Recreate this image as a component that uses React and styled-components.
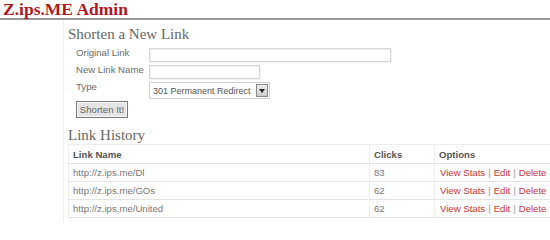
import React from 'react';
import styled, { createGlobalStyle } from 'styled-components';

const GlobalStyle = createGlobalStyle`
  html, body {
    margin: 0;
    padding: 0;
    background: #fff;
    overflow: hidden;
  }
  body {
    font-family: "Liberation Sans", Arial, sans-serif;
    width: 550px;
    height: 222px;
  }
`;

const Header = styled.h1`
  margin: 0;
  padding: 1px 0 0 3px;
  height: 17px;
  line-height: 17px;
  font-family: "Liberation Serif", "Times New Roman", serif;
  font-size: 17.5px;
  font-weight: bold;
  color: #b0171f;
  border-bottom: 2px solid #999;
`;

const Main = styled.div`
  margin-left: 63px;
  border-left: 1px solid #eee;
  padding: 5px 0 10px 4px;
  height: 200px;
`;

const SectionTitle = styled.h2`
  margin: 0;
  font-family: "Liberation Serif", "Times New Roman", serif;
  font-size: 15px;
  font-weight: normal;
  line-height: 18px;
  color: #666;
`;

const Form = styled.form`
  display: grid;
  grid-template-columns: 73px auto;
  grid-auto-rows: 17px;
  margin: 5px 0 0 8px;
  align-items: start;
`;

const Label = styled.label`
  font-size: 9.6px;
  color: #6a6a6a;
  line-height: 13px;
  margin-top: -2px;
  white-space: nowrap;
`;

const TextInput = styled.input`
  box-sizing: border-box;
  width: ${p => p.w}px;
  height: 14px;
  padding: 0;
  margin: 0;
  border: 1px solid #d6d6d6;
  box-shadow: inset 1px 1px 0 #eee, 1px 1px 0 #f2f2f2;
  background: #fff;
`;

const SelectBox = styled.div`
  box-sizing: border-box;
  width: 121px;
  height: 17px;
  border: 1px solid #d0d0d0;
  display: flex;
  align-items: center;
  justify-content: space-between;
  padding: 0 1px 0 3px;
  font-size: 9px;
  color: #555;
  background: #fff;
  white-space: nowrap;
`;

const DropButton = styled.span`
  box-sizing: border-box;
  flex: none;
  width: 12px;
  height: 13px;
  border: 1px solid #888;
  background: linear-gradient(#eee, #ccc);
  display: flex;
  align-items: center;
  justify-content: center;
`;

const SubmitButton = styled.button`
  grid-column: 1 / span 2;
  margin-top: 2px;
  box-sizing: border-box;
  width: 52px;
  height: 17px;
  padding: 0;
  font-family: "Liberation Sans", Arial, sans-serif;
  font-size: 9.6px;
  color: #666;
  background: #e4e4e4;
  border: 1px solid #777;
  box-shadow: inset 0 0 0 1px #fafafa;
`;

const HistoryTitle = styled(SectionTitle)`
  margin-top: 10px;
`;

const Table = styled.table`
  width: 500px;
  border-collapse: collapse;
  font-size: 9.6px;
  color: #777;
  border-top: 1px solid #eee;
  border-left: 1px solid #eee;
`;

const HeadCell = styled.th`
  text-align: left;
  font-weight: bold;
  color: #555;
  height: 18px;
  padding: 0 0 0 4px;
  width: ${p => p.w ? `${p.w}px` : 'auto'};
  border-right: 1px solid #eee;
  border-bottom: 1px solid #e4e4e4;
`;

const Cell = styled.td`
  height: 17px;
  padding: 0 0 0 ${p => p.pad || 4}px;
  border-right: 1px solid #eee;
  border-bottom: 1px solid #e4e4e4;
`;

const Action = styled.a`
  color: #c8343a;
  text-decoration: none;
`;

const Sep = styled.span`
  color: #999;
  margin: 0 3px;
`;

const links = [
  { url: 'http://z.ips.me/Dl', clicks: 83 },
  { url: 'http://z.ips.me/GOs', clicks: 62 },
  { url: 'http://z.ips.me/United', clicks: 62 },
];

export default function App() {
  return (
    <>
      <GlobalStyle />
      <Header>Z.ips.ME Admin</Header>
      <Main>
        <SectionTitle>Shorten a New Link</SectionTitle>
        <Form onSubmit={e => e.preventDefault()}>
          <Label>Original Link</Label>
          <TextInput w={242} />
          <Label>New Link Name</Label>
          <TextInput w={111} />
          <Label>Type</Label>
          <SelectBox>
            <span>301 Permanent Redirect</span>
            <DropButton>
              <svg width="6" height="4" viewBox="0 0 6 4">
                <path d="M0 0 L6 0 L3 4 Z" fill="#222" />
              </svg>
            </DropButton>
          </SelectBox>
          <SubmitButton type="submit">Shorten It!</SubmitButton>
        </Form>
        <HistoryTitle>Link History</HistoryTitle>
        <Table>
          <thead>
            <tr>
              <HeadCell w={296}>Link Name</HeadCell>
              <HeadCell w={60}>Clicks</HeadCell>
              <HeadCell>Options</HeadCell>
            </tr>
          </thead>
          <tbody>
            {links.map(l => (
              <tr key={l.url}>
                <Cell>{l.url}</Cell>
                <Cell>{l.clicks}</Cell>
                <Cell pad={5}>
                  <Action href="#">View Stats</Action>
                  <Sep>|</Sep>
                  <Action href="#">Edit</Action>
                  <Sep>|</Sep>
                  <Action href="#">Delete</Action>
                </Cell>
              </tr>
            ))}
          </tbody>
        </Table>
      </Main>
    </>
  );
}
